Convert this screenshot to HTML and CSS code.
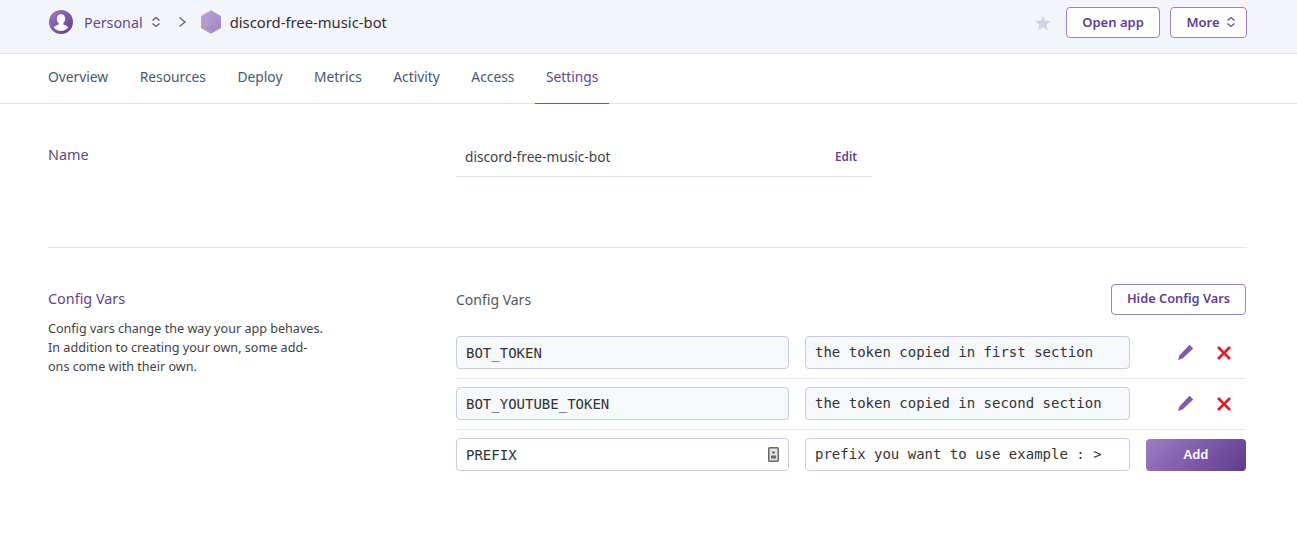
FILE: index.html
```html
<!DOCTYPE html>
<html lang="en">
<head>
  <meta charset="UTF-8" />
  <title>discord-free-music-bot · Settings</title>
  <link rel="stylesheet" href="styles.css">
</head>
<body>

<header class="topbar">
  <div class="crumbs">
    <svg class="avatar" width="24" height="24" viewBox="0 0 24 24">
      <defs>
        <linearGradient id="grad-avatar" x1="0" y1="0" x2="1" y2="1">
          <stop offset="0" stop-color="#9e7cc1" />
          <stop offset="1" stop-color="#5f3a8c" />
        </linearGradient>
        <linearGradient id="grad-hex" x1="0" y1="0" x2="1" y2="1">
          <stop offset="0" stop-color="#bba5d6" />
          <stop offset="1" stop-color="#a084bd" />
        </linearGradient>
      </defs>
      <circle cx="12" cy="12" r="12" fill="url(#grad-avatar)" />
      <path d="M12 4.200c-2.600 0-4.200 2-4.200 4.600 0 1.900.8 3.500 1.900 4.400v1.300c-1.800.6-4.300 1.500-5.100 3.100a9.700 9.700 0 0 0 14.800 0c-.8-1.600-3.300-2.500-5.100-3.100v-1.300c1.100-.9 1.900-2.500 1.900-4.400 0-2.600-1.600-4.600-4.200-4.600z" fill="#fff" />
    </svg>
    <span class="team">Personal</span>
    <svg class="updown" width="10" height="12" viewBox="0 0 10 12"><path d="M1.500 4.500 5 1.500l3.500 3M1.500 7.500 5 10.500l3.500-3" /></svg>
    <svg class="chevron" width="9" height="12" viewBox="0 0 9 12"><path d="M1.500 1.500 7 6l-5.500 4.500" /></svg>
    <svg class="hex" width="22" height="24" viewBox="0 0 22 24">
      <path d="M11 .8 20.500 6.200v11.600L11 23.200 1.500 17.800V6.200z" fill="url(#grad-hex)" stroke="url(#grad-hex)" stroke-linejoin="round" />
    </svg>
    <span class="app-name">discord-free-music-bot</span>
  </div>
  <div class="actions">
    <svg class="star" width="16" height="16" viewBox="0 0 16 16"><path d="M8 .5l2.200 5.200 5.600.4-4.300 3.600 1.400 5.500L8 12.200l-4.900 3 1.400-5.500L.2 6.100l5.600-.4z" /></svg>
    <a class="btn btn-open">Open app</a>
    <a class="btn btn-more">More
      <svg class="updown" width="10" height="12" viewBox="0 0 10 12"><path d="M1.500 4.500 5 1.500l3.500 3M1.500 7.500 5 10.500l3.500-3" /></svg>
    </a>
  </div>
</header>

<nav class="tabs">
  <a>Overview</a>
  <a>Resources</a>
  <a>Deploy</a>
  <a>Metrics</a>
  <a>Activity</a>
  <a>Access</a>
  <a class="active">Settings</a>
</nav>

<main class="content">
  <section class="row row-name">
    <h2 class="row-title title-dark">Name</h2>
    <div class="name-field">
      <span>discord-free-music-bot</span>
      <a class="edit">Edit</a>
    </div>
  </section>

  <section class="row row-config">
    <div class="side">
      <h2 class="row-title">Config Vars</h2>
      <p>Config vars change the way your app behaves. In addition to creating your own, some add-ons come with their own.</p>
    </div>
    <div class="config">
      <div class="config-head">
        <span>Config Vars</span>
        <a class="btn btn-hide">Hide Config Vars</a>
      </div>

      <div class="var-row">
        <div class="field field-key">BOT_TOKEN</div>
        <div class="field field-val">the token copied in first section</div>
        <div class="var-actions">
          <svg class="pencil" width="17" height="17" viewBox="0 0 17 17"><path d="M12.500.8 16.200 4.500 5.500 14.600 1 16l1.400-4.500z" /></svg>
          <svg class="cross" width="16" height="16" viewBox="0 0 16 16"><path d="M2 2l12 12M14 2 2 14" /></svg>
        </div>
      </div>

      <div class="var-row">
        <div class="field field-key">BOT_YOUTUBE_TOKEN</div>
        <div class="field field-val">the token copied in second section</div>
        <div class="var-actions">
          <svg class="pencil" width="17" height="17" viewBox="0 0 17 17"><path d="M12.500.8 16.200 4.500 5.500 14.600 1 16l1.400-4.500z" /></svg>
          <svg class="cross" width="16" height="16" viewBox="0 0 16 16"><path d="M2 2l12 12M14 2 2 14" /></svg>
        </div>
      </div>

      <div class="var-row var-new">
        <div class="field field-key field-white">PREFIX
          <svg class="key-icon" width="11" height="15" viewBox="0 0 11 15">
            <rect x=".75" y=".75" width="9.500" height="13.500" rx="1" fill="#e4e4e4" stroke="#666" stroke-width="1.500" />
            <circle cx="5.500" cy="5.500" r="1.300" fill="#666" />
            <path d="M3 8.500h5v3H3z" fill="#666" />
          </svg>
        </div>
        <div class="field field-val field-white">prefix you want to use example : &gt;</div>
        <a class="btn-add">Add</a>
      </div>
    </div>
  </section>
</main>

</body>
</html>
```

FILE: styles.css
```css
*,
*::before,
*::after {
  box-sizing: border-box;
  margin: 0;
  padding: 0;
}

body {
  font-family: "Noto Sans", "Open Sans", Arial, sans-serif;
  font-size: 14px;
  color: #3f3f44;
  background: #fff;
}

/* top bar */
.topbar {
  height: 54px;
  background: #f4f5fa;
  border-bottom: 1px solid #e3e4ee;
  display: flex;
  align-items: center;
  justify-content: space-between;
  padding: 0 50px 8px 49px;
}

.crumbs,
.actions {
  display: flex;
  align-items: center;
}

.crumbs {
  margin-top: -1px;
}

.team {
  color: #5f4b8b;
  font-size: 14.300px;
  margin-left: 11px;
}

.updown {
  fill: none;
  stroke: #6a4b97;
  stroke-width: 1.300;
}

.crumbs .updown {
  margin-left: 8px;
}

.chevron {
  fill: none;
  stroke: #596579;
  stroke-width: 1.300;
  margin-left: 17px;
}

.hex {
  margin-left: 13px;
}

.app-name {
  margin-left: 8px;
  font-size: 14.800px;
  color: #2f2f35;
}

.star {
  fill: #cfd4e3;
  margin-right: 15px;
}

.btn {
  display: flex;
  align-items: center;
  justify-content: center;
  gap: 7px;
  height: 31px;
  padding-bottom: 2px;
  background: #fff;
  border: 1px solid #9b80bd;
  border-radius: 4px;
  color: #5f3f8f;
  font-size: 13px;
  font-weight: 600;
}

.btn-open {
  width: 94px;
}

.btn-more {
  width: 77px;
  margin-left: 10px;
  padding-left: 5px;
  gap: 6px;
}

/* tabs */
.tabs {
  height: 50px;
  border-bottom: 1px solid #e3e4ee;
  display: flex;
  padding-left: 37px;
}

.tabs a {
  padding: 0 11px;
  margin-right: 9.500px;
  line-height: 46px;
  font-size: 13.800px;
  color: #49586d;
}

.tabs a.active {
  color: #5f4b8b;
  border-bottom: 1px solid #79589f;
  margin-bottom: -1px;
}

/* settings rows */
.content {
  margin: 0 50px 0 48px;
}

.row {
  display: grid;
  grid-template-columns: 408px 1fr;
}

.row-name {
  height: 144px;
  padding-top: 40px;
  border-bottom: 1px solid #e3e4ee;
}

.row-title {
  font-size: 14.400px;
  font-weight: 400;
  color: #5f3f8f;
}

.title-dark {
  color: #5a4a7a;
  margin-top: 1px;
}

.name-field {
  width: 416px;
  height: 33px;
  border-bottom: 1px solid #dde3ef;
  display: flex;
  align-items: center;
  justify-content: space-between;
  padding: 0 15px 8px 9px;
  font-size: 13.700px;
}

.edit {
  color: #5f3f8f;
  font-size: 11.700px;
  font-weight: 600;
}

.row-config {
  padding-top: 35px;
}

.side p {
  width: 280px;
  margin-top: 11px;
  font-size: 12.600px;
  line-height: 19px;
}

.side .row-title {
  margin-top: 6px;
}

.config-head {
  display: flex;
  align-items: center;
  justify-content: space-between;
  height: 32px;
  font-size: 14px;
  color: #55555c;
  margin-bottom: 13px;
}

.btn-hide {
  width: 135px;
  margin-right: 1px;
  font-size: 12.800px;
}

.var-row {
  display: flex;
  align-items: flex-start;
  gap: 16px;
  height: 51px;
  padding-top: 8px;
  border-bottom: 1px solid #e3e7f1;
  margin-right: 1px;
}

.var-row.var-new {
  border-bottom: 0;
}

.field {
  height: 33px;
  background: #f7f8fb;
  border: 1px solid #c5cee2;
  border-radius: 4px;
  padding: 0 9px;
  font-family: "DejaVu Sans Mono", "Liberation Mono", monospace;
  font-size: 14px;
  color: #333;
  display: flex;
  align-items: center;
  justify-content: space-between;
  white-space: nowrap;
}

.field-white {
  background: #fff;
}

.field-key {
  width: 333px;
}

.field-val {
  width: 325px;
  padding-bottom: 2px;
}

.var-actions {
  display: flex;
  align-items: center;
  gap: 22px;
  height: 33px;
  margin-left: 31px;
}

.pencil {
  fill: #7e5ba8;
}

.cross {
  fill: none;
  stroke: #d8232f;
  stroke-width: 2.800;
}

.btn-add {
  flex: 1;
  height: 32px;
  margin-top: 1px;
  border-radius: 4px;
  background: linear-gradient(135deg, #a07cc5, #5f3a8c);
  color: #fff;
  font-size: 13px;
  font-weight: 600;
  line-height: 30px;
  text-align: center;
}
```
